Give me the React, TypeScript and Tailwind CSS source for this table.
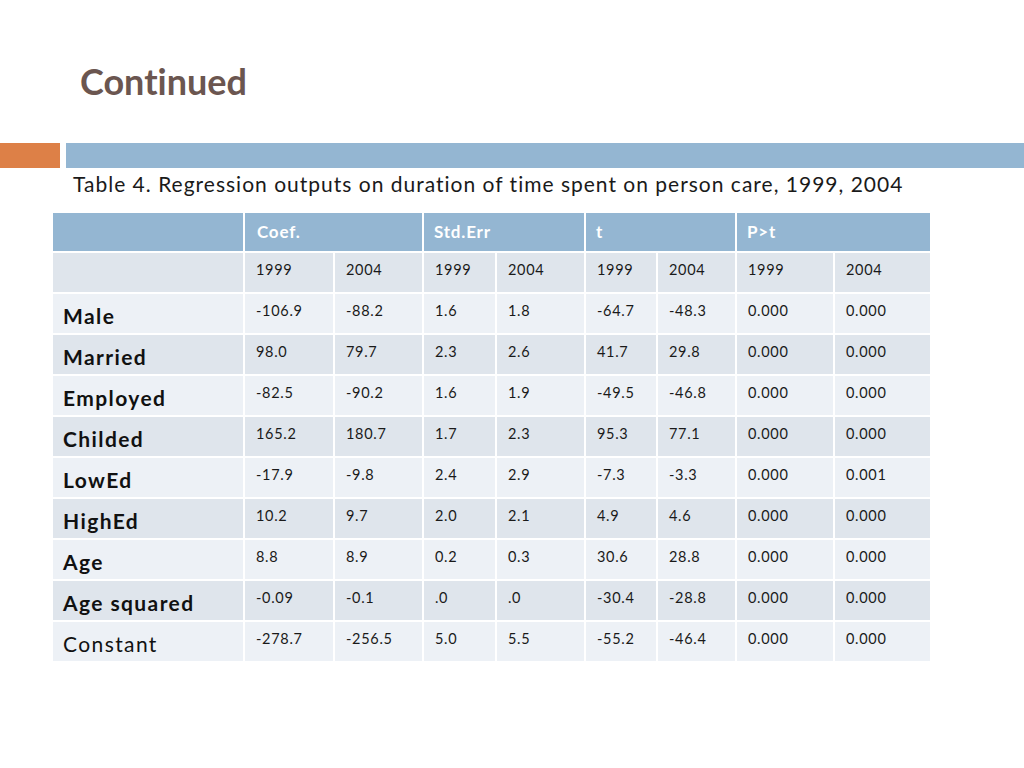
const rows: { label: string; bold: boolean; vals: string[] }[] = [
  { label: "Male", bold: true, vals: ["-106.9", "-88.2", "1.6", "1.8", "-64.7", "-48.3", "0.000", "0.000"] },
  { label: "Married", bold: true, vals: ["98.0", "79.7", "2.3", "2.6", "41.7", "29.8", "0.000", "0.000"] },
  { label: "Employed", bold: true, vals: ["-82.5", "-90.2", "1.6", "1.9", "-49.5", "-46.8", "0.000", "0.000"] },
  { label: "Childed", bold: true, vals: ["165.2", "180.7", "1.7", "2.3", "95.3", "77.1", "0.000", "0.000"] },
  { label: "LowEd", bold: true, vals: ["-17.9", "-9.8", "2.4", "2.9", "-7.3", "-3.3", "0.000", "0.001"] },
  { label: "HighEd", bold: true, vals: ["10.2", "9.7", "2.0", "2.1", "4.9", "4.6", "0.000", "0.000"] },
  { label: "Age", bold: true, vals: ["8.8", "8.9", "0.2", "0.3", "30.6", "28.8", "0.000", "0.000"] },
  { label: "Age squared", bold: true, vals: ["-0.09", "-0.1", ".0", ".0", "-30.4", "-28.8", "0.000", "0.000"] },
  { label: "Constant", bold: false, vals: ["-278.7", "-256.5", "5.0", "5.5", "-55.2", "-46.4", "0.000", "0.000"] },
];

const years = ["1999", "2004", "1999", "2004", "1999", "2004", "1999", "2004"];

export default function App() {
  return (
    <div className="w-[1024px] h-[768px] bg-white overflow-hidden font-['Lato',sans-serif] [font-variant-ligatures:none]">
      {/* title */}
      <div className="pl-[80px] pt-[58px] h-[143px]">
        <h1 className="text-[36px] font-bold text-[#6b5650] leading-[46px]">Continued</h1>
      </div>

      {/* accent bars */}
      <div className="flex gap-[6px] h-[25px]">
        <div className="w-[60px] bg-[#dd8047]" />
        <div className="flex-1 bg-[#94b6d2]" />
      </div>

      <p className="pl-[73px] pt-[2px] text-[21px] leading-[28px] tracking-[1px] text-[#1a1a1a]">
        Table 4. Regression outputs on duration of time spent on person care, 1999, 2004
      </p>

      {/* table */}
      <div className="ml-[53px] mt-[15px] w-[877px] grid grid-cols-[190px_88px_87px_71px_87px_70px_77px_96px_95px] gap-[2px] bg-white">
        {/* header */}
        <div className="bg-[#94b6d2] h-[38px]" />
        <div className="col-span-2 bg-[#94b6d2] h-[38px] pl-[12px] flex items-center text-[17px] tracking-[0.8px] font-bold text-white">Coef.</div>
        <div className="col-span-2 bg-[#94b6d2] h-[38px] pl-[10px] flex items-center text-[17px] tracking-[0.8px] font-bold text-white">Std.Err</div>
        <div className="col-span-2 bg-[#94b6d2] h-[38px] pl-[10px] flex items-center text-[17px] tracking-[0.8px] font-bold text-white">t</div>
        <div className="col-span-2 bg-[#94b6d2] h-[38px] pl-[10px] flex items-center text-[17px] tracking-[0.8px] font-bold text-white">P&gt;t</div>

        {/* years */}
        <div className="bg-[#dfe5ec] h-[39px]" />
        {years.map((y, i) => (
          <div key={i} className="bg-[#dfe5ec] h-[39px] pl-[11px] pt-[6px] text-[14.5px] tracking-[0.7px] text-[#1a1a1a]">
            {y}
          </div>
        ))}

        {rows.map((r, ri) => {
          const bg = ri % 2 === 0 ? "bg-[#edf1f6]" : "bg-[#dfe5ec]";
          return [
            <div
              key={`l${ri}`}
              className={`${bg} h-[39px] pl-[10px] pt-[8px] text-[21px] leading-[28px] tracking-[1.4px] text-[#111] ${r.bold ? "font-bold" : ""}`}
            >
              {r.label}
            </div>,
            ...r.vals.map((v, vi) => (
              <div key={`${ri}-${vi}`} className={`${bg} h-[39px] pl-[11px] pt-[6px] text-[14.5px] tracking-[0.7px] text-[#1a1a1a]`}>
                {v}
              </div>
            )),
          ];
        })}
      </div>
    </div>
  );
}
